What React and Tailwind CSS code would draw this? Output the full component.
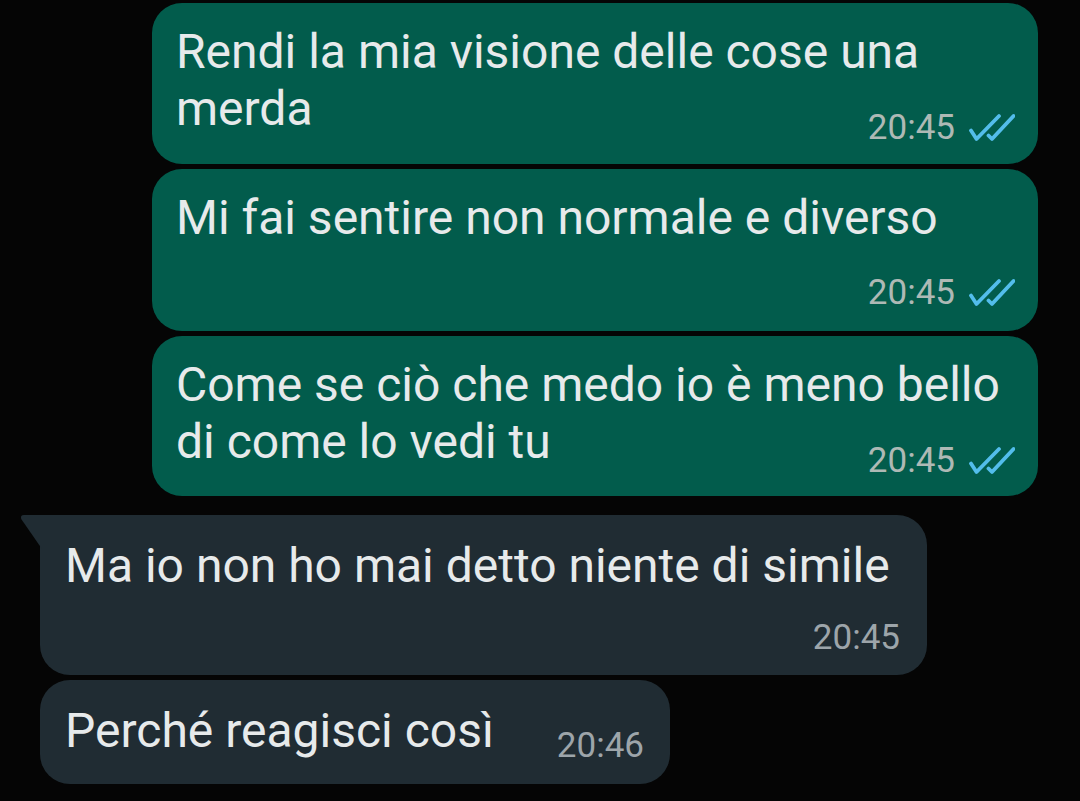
import React from "react";

const Ticks = () => (
  <svg width="46" height="30" viewBox="0 0 46 30" className="shrink-0" fill="none">
    <path d="M2 17.5 L7.5 26 L30 3" stroke="#53bdeb" strokeWidth="3.8" strokeLinecap="round" strokeLinejoin="round" />
    <path d="M19.5 22.5 L23 26 L44.5 3" stroke="#53bdeb" strokeWidth="3.8" strokeLinecap="round" strokeLinejoin="round" />
  </svg>
);

const OutTime = ({ t }) => (
  <div className="flex items-center justify-end gap-[14px] h-[40px]">
    <span className="text-[35px] leading-[40px] text-[#aeb9b5]">{t}</span>
    <Ticks />
  </div>
);

const InTime = ({ t }) => (
  <div className="flex items-center justify-end h-[40px]">
    <span className="text-[35px] leading-[40px] text-[#9da5aa]">{t}</span>
  </div>
);

const Line = ({ children }) => (
  <p className="text-[48px] leading-[57px] text-[#e7eaeb] whitespace-nowrap">{children}</p>
);

export default function App() {
  return (
    <div
      className="w-[1080px] h-[801px] overflow-hidden bg-[#050505] flex flex-col pt-[3px]"
      style={{ fontFamily: "Roboto, 'Noto Sans', sans-serif" }}
    >
      {/* outgoing group */}
      <div className="flex flex-col items-end gap-[5px] pr-[42px]">
        <div className="w-[886px] h-[161px] bg-[#025c4c] rounded-[30px] pl-[24px] pr-[23px] pt-[20px]">
          <Line>Rendi la mia visione delle cose una</Line>
          <div className="flex items-start justify-between">
            <Line>merda</Line>
            <div className="mt-[28px]">
              <OutTime t="20:45" />
            </div>
          </div>
        </div>
        <div className="w-[886px] h-[162px] bg-[#025c4c] rounded-[30px] pl-[24px] pr-[23px] pt-[20px]">
          <Line>Mi fai sentire non normale e diverso</Line>
          <div className="mt-[27px]">
            <OutTime t="20:45" />
          </div>
        </div>
        <div className="w-[886px] h-[160px] bg-[#025c4c] rounded-[30px] pl-[24px] pr-[23px] pt-[20px]">
          <Line>Come se ciò che medo io è meno bello</Line>
          <div className="flex items-start justify-between">
            <Line>di come lo vedi tu</Line>
            <div className="mt-[28px]">
              <OutTime t="20:45" />
            </div>
          </div>
        </div>
      </div>

      {/* incoming group */}
      <div className="flex flex-col items-start gap-[5px] pl-[40px] mt-[19px]">
        <div className="relative w-[887px] h-[160px] bg-[#202c33] rounded-[30px] rounded-tl-none pl-[25px] pr-[27px] pt-[22px]">
          <svg
            className="absolute left-[-20px] top-0"
            width="22"
            height="34"
            viewBox="0 0 22 34"
          >
            <path d="M4 0 H22 V34 L1.2 4 Q0 0 4 0 Z" fill="#202c33" />
          </svg>
          <Line>Ma io non ho mai detto niente di simile</Line>
          <div className="mt-[24px]">
            <InTime t="20:45" />
          </div>
        </div>
        <div className="w-[630px] h-[104px] bg-[#202c33] rounded-[30px] pl-[25px] pr-[26px] pt-[22px] flex items-start justify-between">
          <Line>Perché reagisci così</Line>
          <div className="mt-[24px]">
            <InTime t="20:46" />
          </div>
        </div>
      </div>
    </div>
  );
}
